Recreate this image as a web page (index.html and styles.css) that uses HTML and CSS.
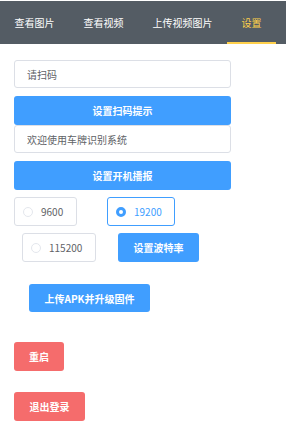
FILE: index.html
```html
<!DOCTYPE html>
<html lang="zh-CN">
<head>
    <meta charset="UTF-8">
    <meta name="viewport" content="width=device-width, initial-scale=1.0">
    <title>设置</title>
    <link rel="stylesheet" href="styles.css">
</head>
<body>
    <nav class="menu">
        <div class="menu-item">查看图片</div>
        <div class="menu-item">查看视频</div>
        <div class="menu-item">上传视频图片</div>
        <div class="menu-item active">设置</div>
    </nav>
    <main class="settings">
        <div class="form">
            <input class="field" type="text" value="请扫码">
            <button class="btn btn-primary btn-block">设置扫码提示</button>
            <input class="field" type="text" value="欢迎使用车牌识别系统">
            <button class="btn btn-primary btn-block spaced">设置开机播报</button>
        </div>
        <div class="radio-row">
            <label class="radio radio-9600"><span class="dot"></span>9600</label>
            <label class="radio radio-19200 checked"><span class="dot"></span>19200</label>
        </div>
        <div class="radio-row second">
            <label class="radio radio-115200"><span class="dot"></span>115200</label>
            <button class="btn btn-primary btn-baud">设置波特率</button>
        </div>
        <button class="btn btn-primary btn-upload">上传APK并升级固件</button>
        <button class="btn btn-danger btn-reboot">重启</button>
        <button class="btn btn-danger btn-logout">退出登录</button>
    </main>
</body>
</html>
```

FILE: styles.css
```css
body {
    margin: 0;
    padding: 0;
    background: #fff;
    font-family: "Noto Sans CJK SC", "Noto Sans", sans-serif;
    font-size: 10px;
    color: #606266;
}
.menu {
    display: flex;
    height: 43px;
    margin-top: 1px;
    background-color: #545c64;
}
.menu-item {
    display: flex;
    align-items: center;
    padding: 0 14.5px;
    padding-top: 1px;
    color: #fff;
    font-size: 10px;
    box-sizing: border-box;
    border-bottom: 2px solid transparent;
}
.menu-item.active {
    color: #ffd04b;
    border-bottom-color: #ffd04b;
}
.settings {
    display: flex;
    flex-direction: column;
    align-items: flex-start;
    padding: 16px 14px 0;
}
.form {
    display: flex;
    flex-direction: column;
    width: 217px;
}
.field {
    height: 28px;
    box-sizing: border-box;
    border: 1px solid #dcdfe6;
    border-radius: 3px;
    padding: 0 12px;
    font-family: inherit;
    font-size: 10px;
    color: #606266;
    outline: none;
}
.btn {
    border: none;
    border-radius: 3px;
    color: #fff;
    font-family: inherit;
    font-size: 10px;
    font-weight: bold;
    height: 29px;
    padding: 0;
    cursor: pointer;
}
.btn-primary {
    background-color: #409eff;
}
.btn-danger {
    background-color: #f56c6c;
}
.btn-block {
    width: 100%;
}
.form .btn-block {
    margin-top: 8px;
}
.form .spaced {
    margin-top: 8px;
}
.radio-row {
    display: flex;
    gap: 30px;
    margin-top: 7px;
}
.radio-row.second {
    margin-left: 8px;
    gap: 22px;
}
.radio {
    display: flex;
    align-items: center;
    height: 29px;
    box-sizing: border-box;
    border: 1px solid #dcdfe6;
    border-radius: 3px;
    padding-left: 8px;
    font-size: 10px;
    color: #606266;
}
.radio-9600 { width: 63px; }
.radio-19200 { width: 68px; }
.radio-115200 { width: 74px; }
.dot {
    width: 10px;
    height: 10px;
    box-sizing: border-box;
    border: 1px solid #e4e7ed;
    border-radius: 50%;
    margin-right: 8px;
    background: #fff;
}
.radio.checked {
    border-color: #409eff;
    color: #409eff;
}
.radio.checked .dot {
    border: 3px solid #409eff;
    background: #fff;
}
.btn-baud {
    width: 81px;
}
.btn-upload {
    width: 121px;
    height: 28px;
    margin: 22px 0 0 15px;
}
.btn-reboot {
    width: 50px;
    margin-top: 30px;
}
.btn-logout {
    width: 71px;
    margin-top: 21px;
}
```
